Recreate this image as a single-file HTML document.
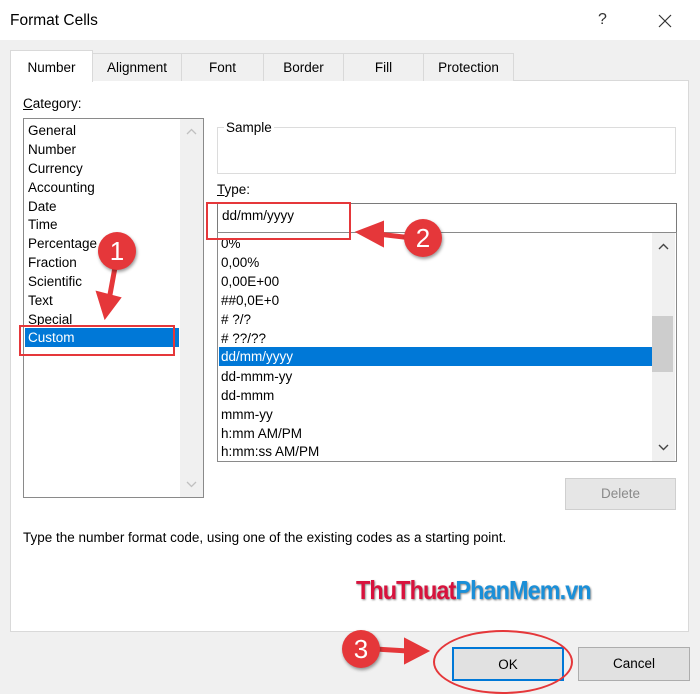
<!DOCTYPE html>
<html><head><style>
body{margin:0;width:700px;height:692px;background:#f0f0f0;font-family:"Liberation Sans",sans-serif;font-size:13.5px;color:#000;position:relative;overflow:hidden}
.a{position:absolute}
.title{left:0;top:0;width:700px;height:40px;background:#fff}
.tab{top:53px;height:28px;border:1px solid #d9d9d9;border-bottom:none;background:#f0f0f0;text-align:center;line-height:28px;box-sizing:border-box}
.panel{left:10px;top:80px;width:679px;height:552px;background:#fff;border:1px solid #d9d9d9;box-sizing:border-box}
.row{left:28px;height:19px;line-height:19px}
.r2{left:221px;height:19px;line-height:19px}
.sel{background:#0078d7;color:#fff}
.btn{border:1px solid #adadad;background:#e1e1e1;text-align:center;box-sizing:border-box}
.badge{width:38px;height:38px;border-radius:50%;background:#e5373a;color:#fff;font-size:26px;text-align:center;line-height:38px;box-shadow:1px 2px 3px rgba(0,0,0,.4)}
</style></head><body>
<div class="a title"></div>
<div class="a" style="left:10px;top:12px;font-size:15.5px">Format Cells</div>
<div class="a" style="left:598px;top:11px;font-size:16px;color:#333">?</div>
<svg class="a" style="left:658px;top:14px" width="14" height="14"><path d="M1 1L13 13M13 1L1 13" stroke="#333" stroke-width="1.2"/></svg>
<div class="a panel"></div>
<div class="a tab" style="left:92px;width:90px">Alignment</div>
<div class="a tab" style="left:181px;width:83px">Font</div>
<div class="a tab" style="left:263px;width:81px">Border</div>
<div class="a tab" style="left:343px;width:81px">Fill</div>
<div class="a tab" style="left:423px;width:91px">Protection</div>
<div class="a tab" style="left:10px;top:50px;width:83px;height:32px;background:#fff;line-height:34px">Number</div>
<div class="a" style="left:23px;top:96px"><u>C</u>ategory:</div>
<div class="a" style="left:23px;top:118px;width:181px;height:380px;border:1px solid #8a8a8a;box-sizing:border-box"></div>
<div class="a" style="left:180px;top:119px;width:23px;height:378px;background:#f0f0f0"></div>
<svg class="a" style="left:180px;top:119px" width="23" height="378"><path d="M7 15L11.5 10.5L16 15M7 363L11.5 367.5L16 363" fill="none" stroke="#c0c0c0" stroke-width="1.3"/></svg>
<div class="a sel" style="left:25px;top:328px;width:154px;height:19px"></div>
<div class="a row" style="top:121px">General</div>
<div class="a row" style="top:140px">Number</div>
<div class="a row" style="top:159px">Currency</div>
<div class="a row" style="top:178px">Accounting</div>
<div class="a row" style="top:197px">Date</div>
<div class="a row" style="top:215px">Time</div>
<div class="a row" style="top:234px">Percentage</div>
<div class="a row" style="top:253px">Fraction</div>
<div class="a row" style="top:272px">Scientific</div>
<div class="a row" style="top:291px">Text</div>
<div class="a row" style="top:310px">Special</div>
<div class="a row" style="top:328px;color:#fff">Custom</div>
<div class="a" style="left:217px;top:127px;width:459px;height:47px;border:1px solid #dcdcdc;box-sizing:border-box"></div>
<div class="a" style="left:224px;top:120px;background:#fff;padding:0 2px">Sample</div>
<div class="a" style="left:217px;top:182px"><u>T</u>ype:</div>
<div class="a" style="left:217px;top:203px;width:460px;height:30px;border:1px solid #7a7a7a;box-sizing:border-box"></div>
<div class="a" style="left:222px;top:208px">dd/mm/yyyy</div>
<div class="a" style="left:217px;top:232px;width:460px;height:230px;border:1px solid #8a8a8a;box-sizing:border-box"></div>
<div class="a" style="left:652px;top:233px;width:23px;height:228px;background:#f0f0f0"></div>
<div class="a" style="left:652px;top:316px;width:21px;height:56px;background:#cdcdcd"></div>
<svg class="a" style="left:652px;top:233px" width="23" height="228"><path d="M7 16L11.5 11.5L16 16M7 212L11.5 216.5L16 212" fill="none" stroke="#444" stroke-width="1.4"/></svg>
<div class="a sel" style="left:219px;top:347px;width:433px;height:19px"></div>
<div class="a r2" style="top:234px">0%</div>
<div class="a r2" style="top:253px">0,00%</div>
<div class="a r2" style="top:272px">0,00E+00</div>
<div class="a r2" style="top:291px">##0,0E+0</div>
<div class="a r2" style="top:310px"># ?/?</div>
<div class="a r2" style="top:329px"># ??/??</div>
<div class="a r2" style="top:347px;color:#fff">dd/mm/yyyy</div>
<div class="a r2" style="top:367px">dd-mmm-yy</div>
<div class="a r2" style="top:386px">dd-mmm</div>
<div class="a r2" style="top:405px">mmm-yy</div>
<div class="a r2" style="top:424px">h:mm AM/PM</div>
<div class="a r2" style="top:442px">h:mm:ss AM/PM</div>
<div class="a btn" style="left:565px;top:478px;width:111px;height:32px;line-height:30px;color:#8a8a8a;background:#e6e6e6;border-color:#cfcfcf">Delete</div>
<div class="a" style="left:23px;top:530px">Type the number format code, using one of the existing codes as a starting point.</div>
<div class="a" style="left:356px;top:575px;font-size:26px;font-weight:bold;letter-spacing:-1px;text-shadow:1px 1px 2px #888;transform:scaleX(0.9);transform-origin:0 0"><span style="color:#d8123d">ThuThuat</span><span style="color:#1a8fd8">PhanMem.vn</span></div>
<div class="a btn" style="left:452px;top:647px;width:112px;height:34px;line-height:32px;border:2px solid #0078d7">OK</div>
<div class="a btn" style="left:578px;top:647px;width:112px;height:34px;line-height:32px">Cancel</div>
<div class="a" style="left:19px;top:325px;width:152px;height:27px;border:2px solid #e5373a"></div>
<div class="a" style="left:206px;top:202px;width:141px;height:34px;border:2px solid #e5373a"></div>
<div class="a" style="left:433px;top:630px;width:136px;height:60px;border:2px solid #e5373a;border-radius:50%"></div>
<svg class="a" style="left:0;top:0" width="700" height="692">
<g fill="#e5373a" stroke="#e5373a" stroke-width="5" stroke-linecap="round">
<line x1="116" y1="262" x2="109" y2="300"/><polygon points="97,292 120,298 105,318" stroke-width="2"/>
<line x1="412" y1="238" x2="378" y2="234"/><polygon points="383,222 383,246 357,232" stroke-width="2"/>
<line x1="375" y1="649" x2="408" y2="651"/><polygon points="405,639 405,663 428,651" stroke-width="2"/>
</g></svg>
<div class="a badge" style="left:98px;top:232px">1</div>
<div class="a badge" style="left:404px;top:219px">2</div>
<div class="a badge" style="left:342px;top:630px">3</div>
</body></html>
